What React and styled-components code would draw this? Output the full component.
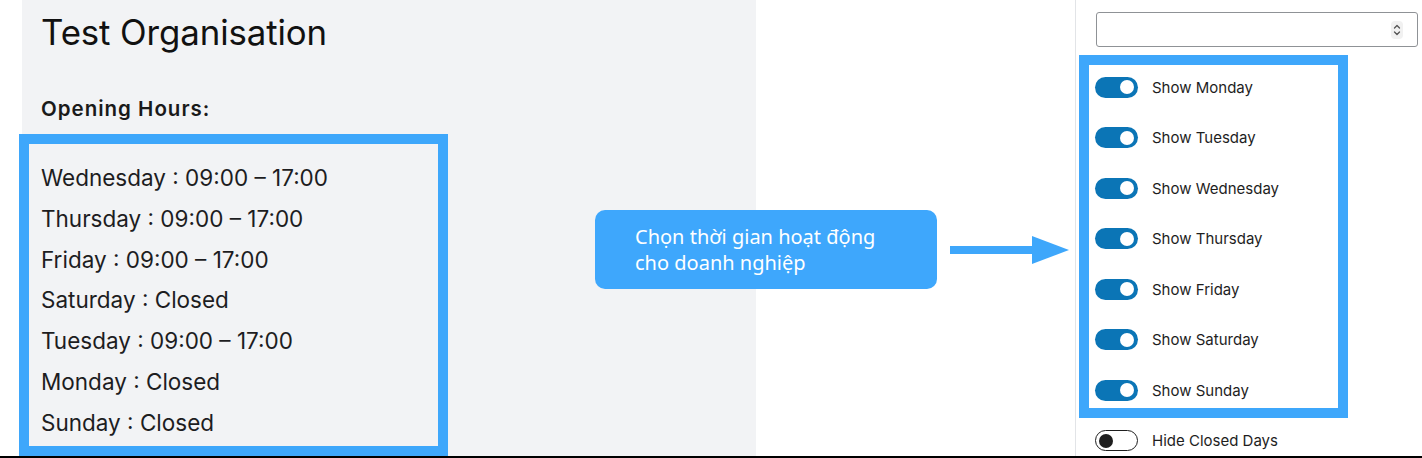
import React from "react";
import styled, { createGlobalStyle } from "styled-components";

const Global = createGlobalStyle`
  html, body { margin: 0; padding: 0; background: #fff; }
  body { font-family: Inter, "Liberation Sans", sans-serif; color: #1d1d1f; }
  * { box-sizing: border-box; }
`;

const ACCENT = "#3ea7fb";

const Page = styled.div`
  position: relative;
  display: flex;
  width: 1422px;
  height: 458px;
  border-bottom: 2px solid #000;
  overflow: hidden;
`;

const Gutter = styled.div`
  width: 22px;
  flex: none;
  background: #fff;
`;

const Preview = styled.section`
  width: 734px;
  flex: none;
  background: #f2f3f5;
  padding: 10px 0 0 19px;
`;

const OrgTitle = styled.h1`
  margin: 0;
  font-size: 34.8px;
  line-height: 44px;
  font-weight: 400;
  letter-spacing: -0.1px;
  color: #111;
`;

const SectionLabel = styled.h3`
  margin: 43px 0 0;
  font-size: 20.5px;
  line-height: 24px;
  font-weight: 600;
  letter-spacing: 1px;
  color: #1a1a1a;
`;

const HoursBox = styled.div`
  margin: 13px 0 0 -22px;
  width: 429px;
  border: 10px solid ${ACCENT};
  padding: 14px 12px 2px;
`;

const HoursRow = styled.div`
  font-size: 22.5px;
  line-height: 40.8px;
  color: #1d1d1f;
  white-space: nowrap;
`;

const Middle = styled.div`
  flex: 1;
  background: #fff;
`;

const Sidebar = styled.aside`
  width: 347px;
  flex: none;
  border-left: 1px solid #e2e4e7;
  background: #fff;
  padding-top: 12px;
`;

const SelectBox = styled.div`
  margin-left: 20px;
  width: 322px;
  height: 35px;
  border: 1px solid #8f9296;
  border-radius: 3px;
  display: flex;
  align-items: center;
  justify-content: flex-end;
  padding-right: 14px;
`;

const Stepper = styled.div`
  width: 12px;
  height: 18px;
  border-radius: 4px;
  background: #f1f1f1;
  display: flex;
  align-items: center;
  justify-content: center;
`;

const ToggleBox = styled.div`
  margin: 8px 0 0 3px;
  width: 269px;
  border: 10px solid ${ACCENT};
  padding: 11.5px 6px 7.5px;
  display: flex;
  flex-direction: column;
  gap: 29.5px;
`;

const ToggleRow = styled.div`
  display: flex;
  align-items: center;
  gap: 14px;
  height: 21px;
  margin: ${(p) => (p.$standalone ? "12px 0 0 19px" : "0")};
`;

const Track = styled.span`
  position: relative;
  width: 43px;
  height: 21px;
  flex: none;
  border-radius: 11px;
  background: ${(p) => (p.$on ? "#0b75b6" : "#fff")};
  border: ${(p) => (p.$on ? "none" : "1.5px solid #1e1e1e")};
`;

const Thumb = styled.span`
  position: absolute;
  top: 50%;
  transform: translateY(-50%);
  width: 14px;
  height: 14px;
  border-radius: 50%;
  background: ${(p) => (p.$on ? "#fff" : "#1e1e1e")};
  ${(p) => (p.$on ? "right: 4px;" : "left: 2.5px;")}
`;

const ToggleLabel = styled.span`
  font-size: 15px;
  color: #1e1e1e;
  white-space: nowrap;
`;

const Callout = styled.div`
  position: absolute;
  left: 595px;
  top: 210px;
  width: 342px;
  height: 79px;
  border-radius: 10px;
  background: #3ea7fc;
  color: #fff;
  font-family: "Noto Sans", "Open Sans", sans-serif;
  font-size: 20px;
  line-height: 26px;
  padding: 14px 0 0 40px;
`;

const ArrowSvg = styled.svg`
  position: absolute;
  left: 950px;
  top: 235px;
`;

const Toggle = ({ on }) => (
  <Track $on={on}>
    <Thumb $on={on} />
  </Track>
);

const hours = [
  "Wednesday : 09:00 – 17:00",
  "Thursday : 09:00 – 17:00",
  "Friday : 09:00 – 17:00",
  "Saturday : Closed",
  "Tuesday : 09:00 – 17:00",
  "Monday : Closed",
  "Sunday : Closed",
];

const days = ["Monday", "Tuesday", "Wednesday", "Thursday", "Friday", "Saturday", "Sunday"];

export default function App() {
  return (
    <>
      <Global />
      <Page>
        <Gutter />
        <Preview>
          <OrgTitle>Test Organisation</OrgTitle>
          <SectionLabel>Opening Hours:</SectionLabel>
          <HoursBox>
            {hours.map((h) => (
              <HoursRow key={h}>{h}</HoursRow>
            ))}
          </HoursBox>
        </Preview>
        <Middle />
        <Sidebar>
          <SelectBox>
            <Stepper>
              <svg width="8" height="14" viewBox="0 0 8 14" fill="none" stroke="#555" strokeWidth="1.3" strokeLinecap="round" strokeLinejoin="round">
                <path d="M1.5 5 L4 2.5 L6.5 5" />
                <path d="M1.5 9 L4 11.5 L6.5 9" />
              </svg>
            </Stepper>
          </SelectBox>
          <ToggleBox>
            {days.map((d) => (
              <ToggleRow key={d}>
                <Toggle on />
                <ToggleLabel>Show {d}</ToggleLabel>
              </ToggleRow>
            ))}
          </ToggleBox>
          <ToggleRow $standalone>
            <Toggle on={false} />
            <ToggleLabel>Hide Closed Days</ToggleLabel>
          </ToggleRow>
        </Sidebar>
        <Callout>
          Chọn thời gian hoạt động
          <br />
          cho doanh nghiệp
        </Callout>
        <ArrowSvg width="120" height="30" viewBox="0 0 120 30">
          <rect x="0" y="11" width="84" height="8" fill={ACCENT} />
          <polygon points="82,1 119,15 82,29" fill={ACCENT} />
        </ArrowSvg>
      </Page>
    </>
  );
}
